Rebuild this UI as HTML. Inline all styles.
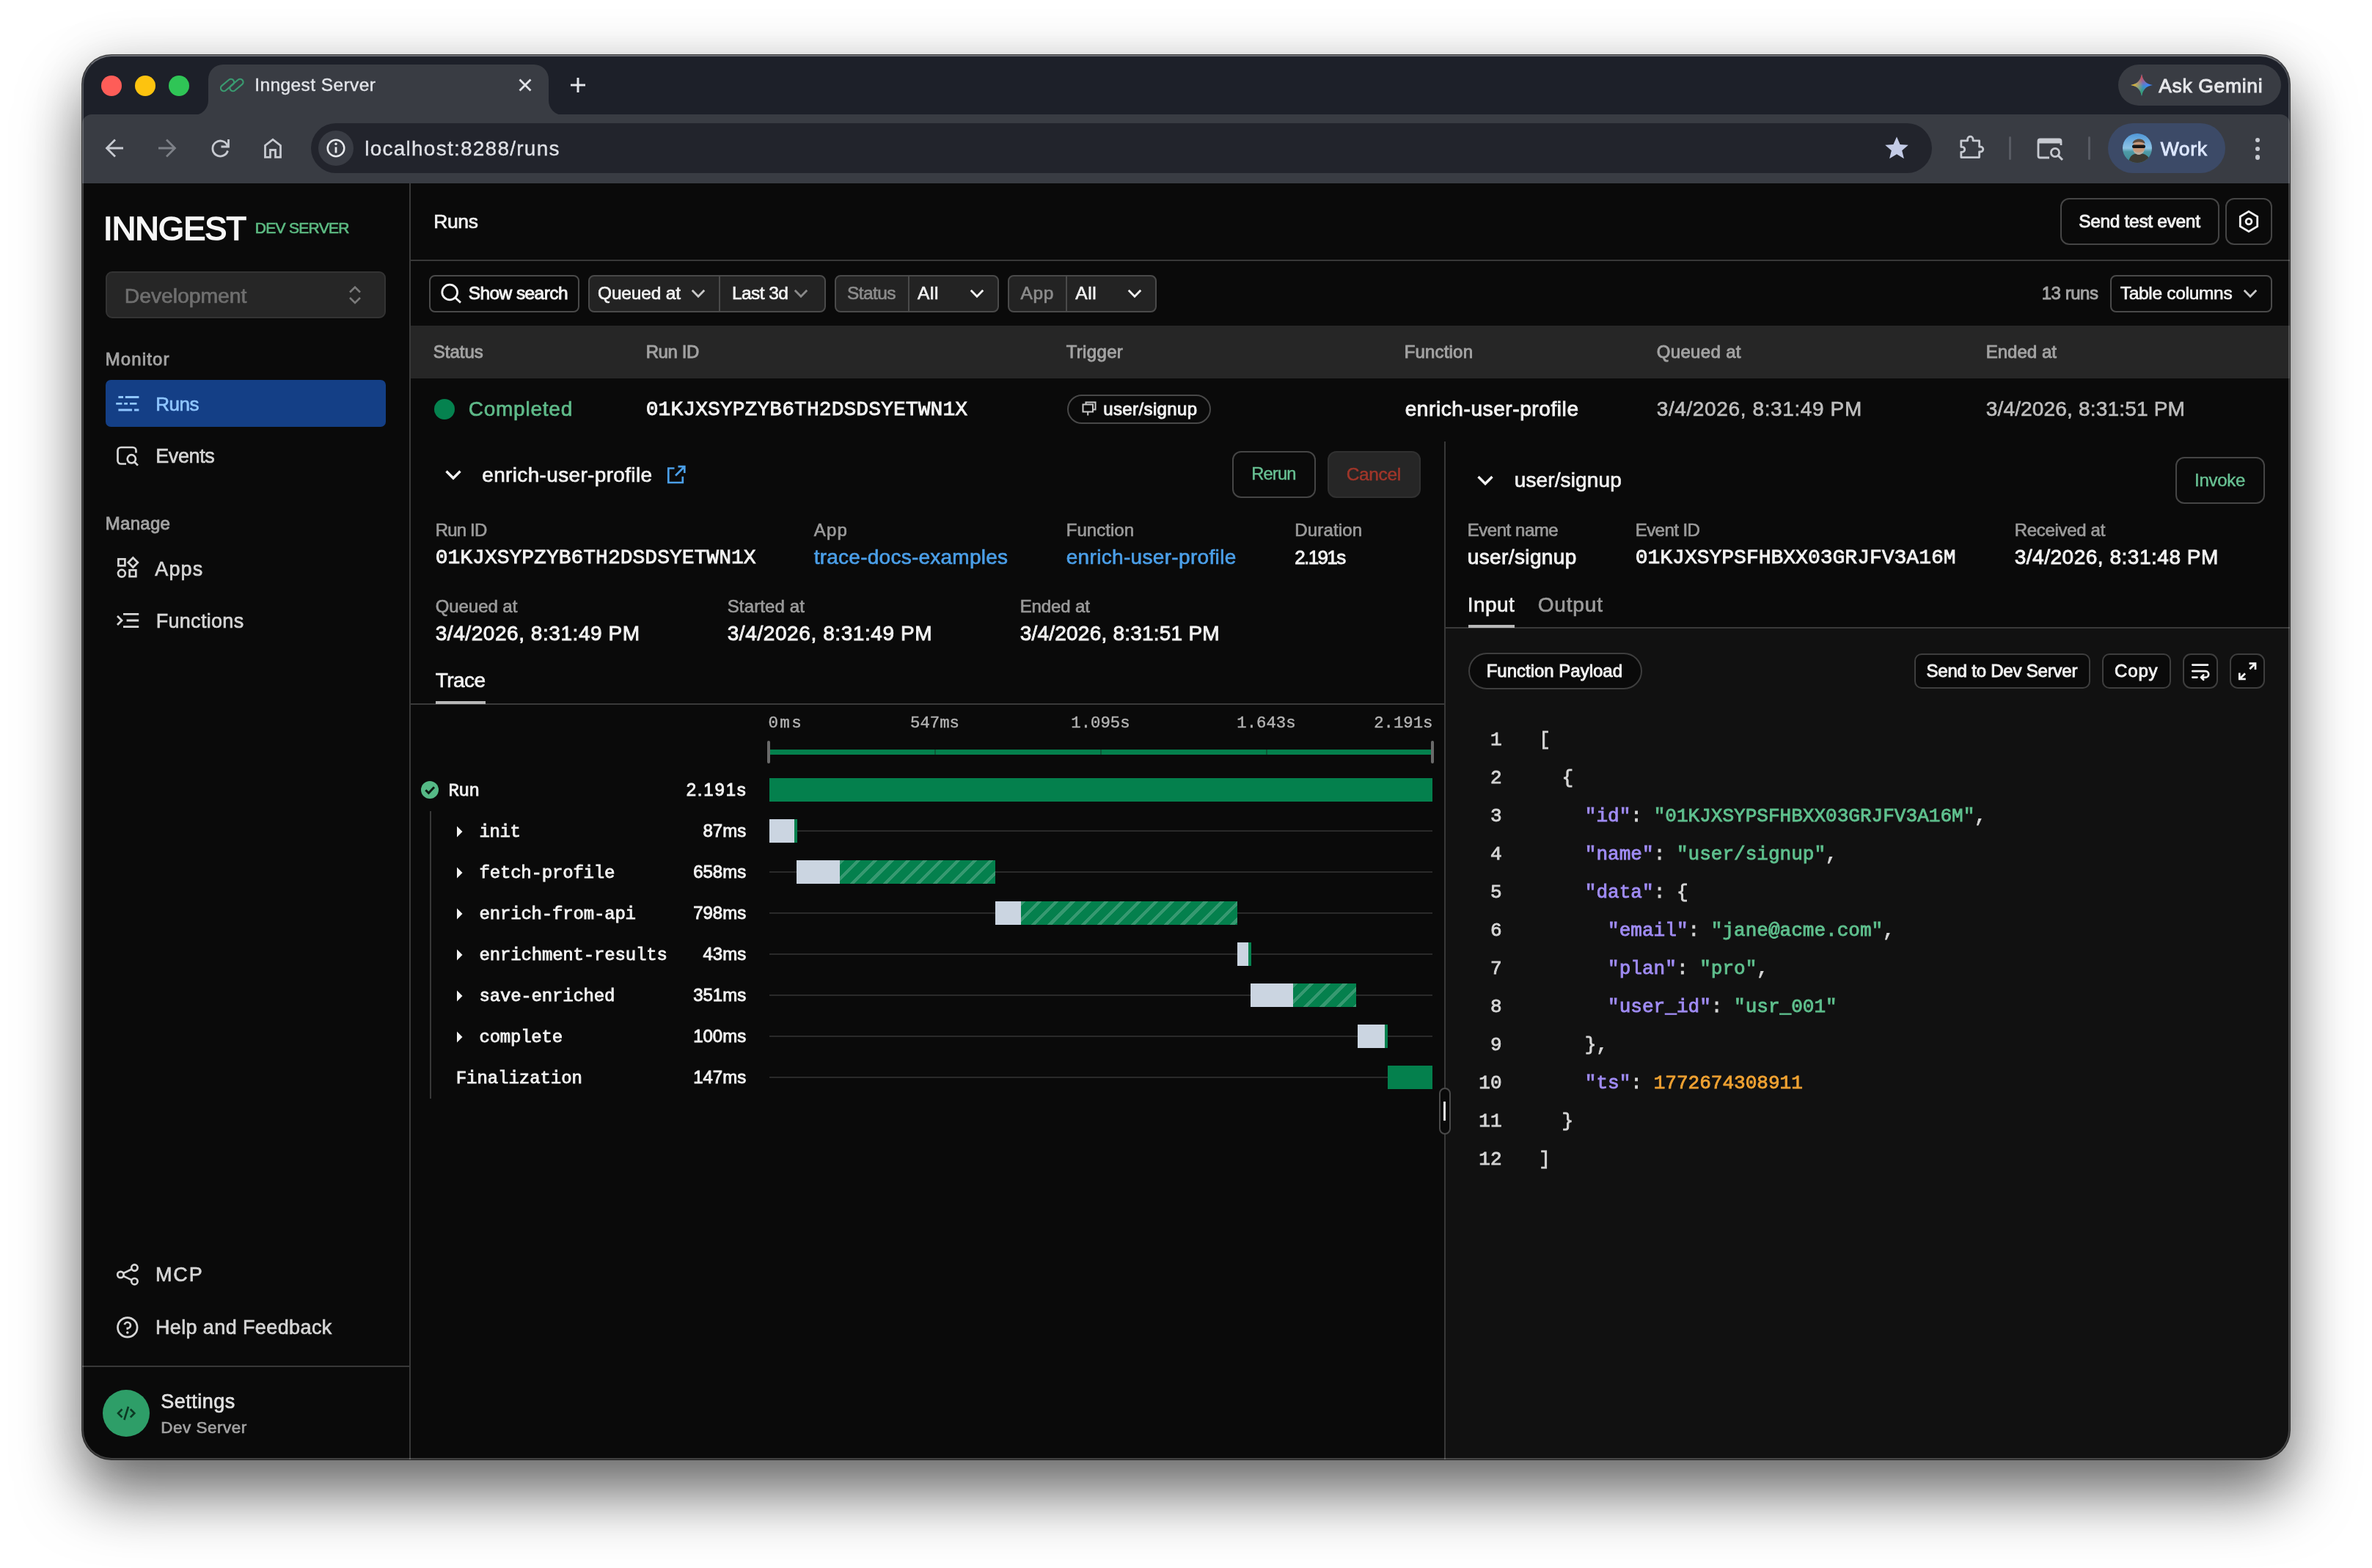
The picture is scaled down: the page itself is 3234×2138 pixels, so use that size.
<!DOCTYPE html>
<html lang="en"><head><meta charset="utf-8"><title>Inngest Server</title><style>
html,body{margin:0;padding:0;background:#fff;}
body{width:3234px;height:2138px;position:relative;overflow:hidden;font-family:"Liberation Sans",sans-serif;}
.sh{position:absolute;left:112px;top:75px;width:3010px;height:1915px;border-radius:40px;box-shadow:0 48px 84px rgba(0,0,0,.56),0 0 72px rgba(0,0,0,.1),0 0 0 1px rgba(0,0,0,.72);background:#0a0a0a;}
.win{position:absolute;left:112px;top:75px;width:3010px;height:1915px;border-radius:40px;overflow:hidden;}
.o{position:absolute;left:-112px;top:-75px;width:3234px;height:2138px;will-change:transform;}
.rim{position:absolute;left:112px;top:75px;width:3010px;height:1915px;border-radius:40px;box-sizing:border-box;border:2px solid rgba(255,255,255,.22);border-top:2.5px solid rgba(255,255,255,.34);pointer-events:none;}
.b{position:absolute;display:block;}
.t{position:absolute;white-space:nowrap;line-height:1;}
</style></head>
<body>
<div class="sh"></div>
<div class="win"><div class="o">
<div class="b " style="left:112px;top:75px;width:3010px;height:101px;background:#1d2029;"></div>
<div class="b " style="left:138px;top:103px;width:28px;height:28px;background:#fe5d58;border-radius:50%;"></div>
<div class="b " style="left:184px;top:103px;width:28px;height:28px;background:#fdc30f;border-radius:50%;"></div>
<div class="b " style="left:230px;top:103px;width:28px;height:28px;background:#2fc556;border-radius:50%;"></div>
<svg class="b" style="left:260px;top:84px;" width="512" height="74" viewBox="260 84 512 74" fill="none"><path d="M264 157 A20 20 0 0 0 284 137 L284 108 A20 20 0 0 1 304 88 L728 88 A20 20 0 0 1 748 108 L748 137 A20 20 0 0 0 768 157 Z" fill="#393c43"/></svg>
<svg class="b" style="left:296px;top:100px;" width="40" height="32" viewBox="296 100 40 32" fill="none"><g stroke="#3a9a70" stroke-width="2.2"><rect x="-10.5" y="-4.2" width="21" height="8.4" rx="4.2" transform="translate(310 116) rotate(-40)"/><rect x="-10.5" y="-4.2" width="21" height="8.4" rx="4.2" transform="translate(322.5 116) rotate(-40)"/></g></svg>
<span class="t" id="t1" style="font-size:24.5px;color:#e2e4e9;-webkit-text-stroke:0.4px;letter-spacing:0.42px;left:347.2px;top:104.1px;">Inngest Server</span>
<svg class="b" style="left:700px;top:100px;" width="32" height="32" viewBox="700 100 32 32" fill="none"><path d="M708.5 108.5 L723.5 123.5 M723.5 108.5 L708.5 123.5" stroke="#e2e4e9" stroke-width="2.8"/></svg>
<svg class="b" style="left:772px;top:100px;" width="32" height="32" viewBox="772 100 32 32" fill="none"><path d="M778 116 H798 M788 106 V126" stroke="#e2e4e9" stroke-width="3"/></svg>
<div class="b " style="left:2888px;top:88px;width:222px;height:56px;background:#393c43;border-radius:28px;"></div>
<svg class="b" style="left:2902px;top:98px;" width="36" height="36" viewBox="-18 -18 36 36" fill="none"><defs><clipPath id="gs"><path d="M0 -15 C1.6 -6 6 -1.6 15 0 C6 1.6 1.6 6 0 15 C-1.6 6 -6 1.6 -15 0 C-6 -1.6 -1.6 -6 0 -15Z"/></clipPath><radialGradient id="gr"><stop offset="0" stop-color="#ea4335"/><stop offset="1" stop-color="#ea4335" stop-opacity="0"/></radialGradient><radialGradient id="gy"><stop offset="0" stop-color="#fbbc04"/><stop offset="1" stop-color="#fbbc04" stop-opacity="0"/></radialGradient><radialGradient id="gg"><stop offset="0" stop-color="#34a853"/><stop offset="1" stop-color="#34a853" stop-opacity="0"/></radialGradient></defs><g clip-path="url(#gs)"><rect x="-16" y="-16" width="32" height="32" fill="#4285f4"/><circle cx="0" cy="-13" r="15" fill="url(#gr)"/><circle cx="0" cy="13" r="15" fill="url(#gg)"/><circle cx="-13" cy="0" r="15" fill="url(#gy)"/></g></svg>
<span class="t" id="t2" style="font-size:26.5px;color:#e6e7ea;-webkit-text-stroke:0.88px;letter-spacing:0.65px;left:2943.2px;top:103.6px;">Ask Gemini</span>
<div class="b " style="left:112px;top:156px;width:3010px;height:94px;background:#393c43;border-radius:13px 13px 0 0;"></div>
<svg class="b" style="left:140px;top:186px;" width="32" height="32" viewBox="140 186 32 32" fill="none"><path d="M168 202 H146 M157 190.5 L145.5 202 L157 213.5" stroke="#c7cad1" stroke-width="2.8"/></svg>
<svg class="b" style="left:212px;top:186px;" width="32" height="32" viewBox="212 186 32 32" fill="none"><path d="M216 202 H238 M227 190.5 L238.5 202 L227 213.5" stroke="#7d8087" stroke-width="2.8"/></svg>
<svg class="b" style="left:284px;top:186px;" width="32" height="32" viewBox="284 186 32 32" fill="none"><path d="M310.3 199 A10.5 10.5 0 1 0 310.5 205.5" stroke="#c7cad1" stroke-width="2.8"/><path d="M311.5 190 V200 H301.5" stroke="#c7cad1" stroke-width="2.8"/></svg>
<svg class="b" style="left:356px;top:186px;" width="32" height="32" viewBox="356 186 32 32" fill="none"><path d="M361.5 214.3 V198.5 L372 190.2 L382.5 198.5 V214.3 H375.5 V204.5 H368.5 V214.3 Z" stroke="#c7cad1" stroke-width="2.8" stroke-linejoin="miter"/></svg>
<div class="b " style="left:424px;top:168px;width:2210px;height:68px;background:#22242c;border-radius:34px;"></div>
<div class="b " style="left:434px;top:178px;width:48px;height:48px;background:#393c44;border-radius:50%;"></div>
<svg class="b" style="left:442px;top:186px;" width="32" height="32" viewBox="442 186 32 32" fill="none"><circle cx="458" cy="202" r="11.3" stroke="#e8eaed" stroke-width="2.5"/><path d="M458 200.5 V208.5" stroke="#e8eaed" stroke-width="2.8"/><circle cx="458" cy="196.2" r="1.7" fill="#e8eaed"/></svg>
<span class="t" id="t3" style="font-size:28px;color:#dfe1e6;-webkit-text-stroke:0.35px;letter-spacing:1.25px;left:497.2px;top:189.4px;">localhost:8288/runs</span>
<svg class="b" style="left:2568px;top:184px;" width="36" height="36" viewBox="-18 -18 36 36" fill="none"><path d="M0 -15.5 L4.6 -5 L15.8 -4.2 L7.2 3.2 L9.9 14.3 L0 8.3 L-9.9 14.3 L-7.2 3.2 L-15.8 -4.2 L-4.6 -5Z" fill="#c3cbe6"/></svg>
<svg class="b" style="left:2668px;top:182px;" width="40" height="40" viewBox="2668 182 40 40" fill="none"><path d="M2673.8 191.8 H2682.6 V189.8 A3.7 3.7 0 0 1 2690 189.8 V191.8 H2698.6 V200.2 H2700.4 A3.4 3.4 0 0 1 2700.4 207 H2698.6 V214.6 H2673.8 V207.3 H2675.2 A3.5 3.5 0 0 0 2675.2 200.3 H2673.8 Z" stroke="#c7cad1" stroke-width="2.8" stroke-linejoin="round"/></svg>
<div class="b " style="left:2738.5px;top:186px;width:3px;height:32px;background:#585b63;border-radius:2px;"></div>
<div class="b " style="left:2846.5px;top:186px;width:3px;height:32px;background:#585b63;border-radius:2px;"></div>
<svg class="b" style="left:2774px;top:182px;" width="40" height="40" viewBox="2774 182 40 40" fill="none"><path d="M2794 215 H2781.5 A2.5 2.5 0 0 1 2779 212.5 V192.5 A2.5 2.5 0 0 1 2781.5 190 H2807.5 A2.5 2.5 0 0 1 2810 192.5 V198" stroke="#c7cad1" stroke-width="2.8"/><path d="M2780 191 H2809 V195.5 H2780Z" fill="#c7cad1"/><circle cx="2802" cy="208" r="5.6" stroke="#c7cad1" stroke-width="2.8"/><path d="M2806 212 L2812 218" stroke="#c7cad1" stroke-width="3"/></svg>
<div class="b " style="left:2874px;top:168px;width:160px;height:68px;background:#3c4a67;border-radius:34px;"></div>
<svg class="b" style="left:2894px;top:182px;" width="40" height="40" viewBox="0 0 40 40" fill="none"><defs><clipPath id="av"><circle cx="20" cy="20" r="20"/></clipPath><linearGradient id="sky" x1="0" y1="0" x2="0" y2="1"><stop offset="0" stop-color="#4f97d8"/><stop offset=".5" stop-color="#8fc4e6"/><stop offset=".62" stop-color="#4d9aa6"/><stop offset="1" stop-color="#3f8a96"/></linearGradient></defs><g clip-path="url(#av)"><rect width="40" height="40" fill="url(#sky)"/><path d="M8 40 C9 30 15 27 22 27 C31 27 37 31 38 40Z" fill="#3b3a33"/><ellipse cx="22" cy="19" rx="8.2" ry="10" fill="#c79a7c"/><path d="M13.5 14 C14 6 30 5 30.5 14 C27 10.5 17 10.5 13.5 14Z" fill="#5a4a3e"/><path d="M14.5 22 C15 31 29 31 29.5 22 C27 27 17 27 14.5 22Z" fill="#b9aea2"/><rect x="13" y="15.5" width="18" height="4.6" rx="2" fill="#161616"/></g></svg>
<span class="t" id="t4" style="font-size:26.5px;color:#dde7ff;-webkit-text-stroke:0.88px;letter-spacing:0.65px;left:2945.7px;top:189.6px;">Work</span>
<div class="b " style="left:3074.7px;top:187.7px;width:6.6px;height:6.6px;background:#c7cad1;border-radius:50%;"></div>
<div class="b " style="left:3074.7px;top:199.5px;width:6.6px;height:6.6px;background:#c7cad1;border-radius:50%;"></div>
<div class="b " style="left:3074.7px;top:211.3px;width:6.6px;height:6.6px;background:#c7cad1;border-radius:50%;"></div>
<div class="b " style="left:112px;top:250px;width:3010px;height:1740px;background:#0a0a0a;"></div>
<div class="b " style="left:558px;top:250px;width:2px;height:1740px;background:#383838;"></div>
<span class="t" id="t5" style="font-size:45px;color:#f6f6f6;-webkit-text-stroke:1.7px;letter-spacing:-0.84px;left:141px;top:288.7px;">INNGEST</span>
<span class="t" id="t6" style="font-size:21px;color:#5cba82;-webkit-text-stroke:0.7px;letter-spacing:-0.69px;left:347.7px;top:300.3px;">DEV SERVER</span>
<div class="b " style="left:144px;top:370px;width:382px;height:64px;background:#262626;border:2px solid #333;border-radius:9px;box-sizing:border-box;"></div>
<span class="t" id="t7" style="font-size:28.5px;color:#6f6f6f;-webkit-text-stroke:0.65px;letter-spacing:-0.11px;left:169.7px;top:389.2px;">Development</span>
<svg class="b" style="left:470px;top:386px;" width="32" height="32" viewBox="470 386 32 32" fill="none"><path d="M477 398.5 L484 391.5 L491 398.5 M477 406 L484 413 L491 406" stroke="#7a7a7a" stroke-width="2.6"/></svg>
<span class="t" id="t8" style="font-size:24px;color:#a3a3a3;-webkit-text-stroke:0.88px;letter-spacing:1.13px;left:143.7px;top:477.9px;">Monitor</span>
<div class="b " style="left:144px;top:518px;width:382px;height:64px;background:#143f86;border-radius:7px;"></div>
<svg class="b" style="left:154px;top:534px;" width="40" height="32" viewBox="154 534 40 32" fill="none"><path d="M161.4 541.5 H168 M170.8 541.5 H189.4 M158.2 550.3 H166.4 M169.2 550.3 H174 M177 550.3 H186.5 M161.4 559 H180 M183 559 H189.4" stroke="#8fc6ff" stroke-width="2.8"/></svg>
<span class="t" id="t9" style="font-size:26px;color:#8fc6ff;-webkit-text-stroke:0.65px;letter-spacing:-0.47px;left:212.2px;top:537.9px;">Runs</span>
<svg class="b" style="left:154px;top:604px;" width="40" height="36" viewBox="154 604 40 36" fill="none"><path d="M172 632.5 H165 A4.5 4.5 0 0 1 160.5 628 V614.5 A4.5 4.5 0 0 1 165 610 H181 A4.5 4.5 0 0 1 185.5 614.5 V617.5" stroke="#d6d6d6" stroke-width="2.7"/><circle cx="179.3" cy="625.8" r="5.6" stroke="#d6d6d6" stroke-width="2.7"/><path d="M183.4 630 L188 634.6" stroke="#d6d6d6" stroke-width="2.7"/></svg>
<span class="t" id="t10" style="font-size:27px;color:#d6d6d6;-webkit-text-stroke:0.65px;letter-spacing:-0.39px;left:212.2px;top:609.2px;">Events</span>
<span class="t" id="t11" style="font-size:24px;color:#a3a3a3;-webkit-text-stroke:0.88px;letter-spacing:0.31px;left:143.7px;top:702.4px;">Manage</span>
<svg class="b" style="left:154px;top:756px;" width="40" height="36" viewBox="154 756 40 36" fill="none"><g stroke="#d6d6d6" stroke-width="2.7"><rect x="161.4" y="762.3" width="9" height="9"/><rect x="-4.6" y="-4.6" width="9.2" height="9.2" transform="translate(181.4 767) rotate(45)"/><circle cx="165.9" cy="781.8" r="4.9"/><rect x="176.6" y="777.4" width="8.7" height="8.7"/></g></svg>
<span class="t" id="t12" style="font-size:27px;color:#d6d6d6;-webkit-text-stroke:0.65px;letter-spacing:1.19px;left:211.2px;top:762.9px;">Apps</span>
<svg class="b" style="left:154px;top:830px;" width="40" height="32" viewBox="154 830 40 32" fill="none"><path d="M168 837.3 H189.2 M172.6 846 H189.2 M168 854.7 H189.2 M160 840 L166 846 L160 852" stroke="#d6d6d6" stroke-width="2.8"/></svg>
<span class="t" id="t13" style="font-size:27px;color:#d6d6d6;-webkit-text-stroke:0.65px;letter-spacing:0.30px;left:212.7px;top:833.5px;">Functions</span>
<svg class="b" style="left:154px;top:1720px;" width="40" height="36" viewBox="154 1720 40 36" fill="none"><g stroke="#d6d6d6" stroke-width="2.7"><circle cx="164.4" cy="1738" r="4.2"/><circle cx="183.4" cy="1728.6" r="4.2"/><circle cx="183.4" cy="1747.2" r="4.2"/><path d="M168.2 1736.1 L179.6 1730.5 M168.2 1739.9 L179.6 1745.4"/></g></svg>
<span class="t" id="t14" style="font-size:27px;color:#d6d6d6;-webkit-text-stroke:0.65px;letter-spacing:1.95px;left:211.9px;top:1724.7px;">MCP</span>
<svg class="b" style="left:156px;top:1792px;" width="36" height="36" viewBox="156 1792 36 36" fill="none"><circle cx="173.8" cy="1809.9" r="13.3" stroke="#d6d6d6" stroke-width="2.7"/><path d="M169.8 1806.3 A4.1 4.1 0 1 1 173.8 1811.2 V1813" stroke="#d6d6d6" stroke-width="2.7"/><circle cx="173.8" cy="1817" r="1.8" fill="#d6d6d6"/></svg>
<span class="t" id="t15" style="font-size:27px;color:#d6d6d6;-webkit-text-stroke:0.65px;letter-spacing:0.39px;left:211.9px;top:1797.1px;">Help and Feedback</span>
<div class="b " style="left:112px;top:1862px;width:447px;height:2px;background:#383838;"></div>
<div class="b " style="left:140px;top:1895px;width:64px;height:64px;background:#2e9e68;border-radius:50%;"></div>
<svg class="b" style="left:156px;top:1911px;" width="32" height="32" viewBox="156 1911 32 32" fill="none"><path d="M166.5 1921.5 L161 1927 L166.5 1932.5 M177.8 1921.5 L183.3 1927 L177.8 1932.5 M175 1918 L169.4 1936" stroke="#0c3a24" stroke-width="2.6"/></svg>
<span class="t" id="t16" style="font-size:27px;color:#e2e2e2;-webkit-text-stroke:0.65px;letter-spacing:0.48px;left:219.3px;top:1898.4px;">Settings</span>
<span class="t" id="t17" style="font-size:22.5px;color:#a3a3a3;-webkit-text-stroke:0.65px;letter-spacing:0.50px;left:219.3px;top:1935.8px;">Dev Server</span>
<span class="t" id="t18" style="font-size:26.5px;color:#f2f2f2;-webkit-text-stroke:0.65px;letter-spacing:-0.36px;left:591.2px;top:289.1px;">Runs</span>
<div class="b " style="left:560px;top:354px;width:2562px;height:2px;background:#383838;"></div>
<div class="b " style="left:2809px;top:270px;width:216.5px;height:64px;border:2px solid #454545;border-radius:12px;box-sizing:border-box;"></div>
<span class="t" id="t19" style="font-size:24.5px;color:#f2f2f2;-webkit-text-stroke:0.88px;letter-spacing:-0.32px;left:2834.2px;top:290.1px;">Send test event</span>
<div class="b " style="left:3034px;top:270px;width:64px;height:64px;border:2px solid #454545;border-radius:12px;box-sizing:border-box;"></div>
<svg class="b" style="left:3048px;top:284px;" width="36" height="36" viewBox="-18 -18 36 36" fill="none"><path d="M0 -13.6 L11.7 -6.8 V6.8 L0 13.6 L-11.7 6.8 V-6.8 Z" stroke="#f2f2f2" stroke-width="2.8" stroke-linejoin="miter"/><circle r="3.9" stroke="#f2f2f2" stroke-width="2.8"/></svg>
<div class="b " style="left:584.5px;top:374.5px;width:205.3px;height:51px;border:2px solid #4a4a4a;border-radius:8px;box-sizing:border-box;"></div>
<svg class="b" style="left:596px;top:382px;" width="36" height="36" viewBox="596 382 36 36" fill="none"><circle cx="613.2" cy="398.5" r="10.4" stroke="#f2f2f2" stroke-width="2.8"/><path d="M620.8 406 L628 412.6" stroke="#f2f2f2" stroke-width="2.8"/></svg>
<span class="t" id="t20" style="font-size:24.5px;color:#f2f2f2;-webkit-text-stroke:0.88px;letter-spacing:-0.58px;left:638.7px;top:387.9px;">Show search</span>
<div class="b " style="left:802px;top:374.5px;width:324px;height:51px;border:2px solid #4a4a4a;border-radius:8px;box-sizing:border-box;background:#232323;"></div>
<div class="b " style="left:980px;top:376px;width:2px;height:48px;background:#4a4a4a;"></div>
<span class="t" id="t21" style="font-size:24.5px;color:#f2f2f2;-webkit-text-stroke:0.65px;letter-spacing:-0.18px;left:815px;top:387.9px;">Queued at</span>
<svg class="b" style="left:938px;top:390px;" width="28" height="20" viewBox="938 390 28 20" fill="none"><path d="M943.75 395.75 L952 404.25 L960.25 395.75" stroke="#c8c8c8" stroke-width="2.8"/></svg>
<span class="t" id="t22" style="font-size:24.5px;color:#f2f2f2;-webkit-text-stroke:0.65px;letter-spacing:-0.55px;left:997.9px;top:387.9px;">Last 3d</span>
<svg class="b" style="left:1078px;top:390px;" width="28" height="20" viewBox="1078 390 28 20" fill="none"><path d="M1083.75 395.75 L1092 404.25 L1100.25 395.75" stroke="#8a8a8a" stroke-width="2.8"/></svg>
<div class="b " style="left:1138.3px;top:374.5px;width:223.5px;height:51px;border:2px solid #4a4a4a;border-radius:8px;box-sizing:border-box;background:#232323;"></div>
<div class="b " style="left:1238px;top:376px;width:2px;height:48px;background:#4a4a4a;"></div>
<span class="t" id="t23" style="font-size:24.5px;color:#8c8c8c;-webkit-text-stroke:0.65px;letter-spacing:-0.59px;left:1155.1px;top:387.9px;">Status</span>
<span class="t" id="t24" style="font-size:24.5px;color:#f2f2f2;-webkit-text-stroke:0.65px;letter-spacing:0.59px;left:1251px;top:387.9px;">All</span>
<svg class="b" style="left:1318px;top:390px;" width="28" height="20" viewBox="1318 390 28 20" fill="none"><path d="M1323.75 395.75 L1332 404.25 L1340.25 395.75" stroke="#f2f2f2" stroke-width="2.8"/></svg>
<div class="b " style="left:1374.4px;top:374.5px;width:202.3px;height:51px;border:2px solid #4a4a4a;border-radius:8px;box-sizing:border-box;background:#232323;"></div>
<div class="b " style="left:1453.2px;top:376px;width:2px;height:48px;background:#4a4a4a;"></div>
<span class="t" id="t25" style="font-size:24.5px;color:#8c8c8c;-webkit-text-stroke:0.65px;letter-spacing:0.65px;left:1391.5px;top:387.9px;">App</span>
<span class="t" id="t26" style="font-size:24.5px;color:#f2f2f2;-webkit-text-stroke:0.65px;letter-spacing:0.63px;left:1466.3px;top:387.9px;">All</span>
<svg class="b" style="left:1532.7px;top:390px;" width="28" height="20" viewBox="1532.7 390 28 20" fill="none"><path d="M1538.45 395.75 L1546.7 404.25 L1554.95 395.75" stroke="#f2f2f2" stroke-width="2.8"/></svg>
<span class="t" id="t27" style="font-size:24px;color:#a3a3a3;-webkit-text-stroke:0.88px;letter-spacing:-0.46px;left:2783.7px;top:388.4px;">13 runs</span>
<div class="b " style="left:2877px;top:374.5px;width:220.5px;height:51px;border:2px solid #4a4a4a;border-radius:8px;box-sizing:border-box;"></div>
<span class="t" id="t28" style="font-size:24.5px;color:#f2f2f2;-webkit-text-stroke:0.65px;letter-spacing:-0.30px;left:2890.7px;top:387.9px;">Table columns</span>
<svg class="b" style="left:3053.5px;top:390px;" width="28" height="20" viewBox="3053.5 390 28 20" fill="none"><path d="M3059.25 395.75 L3067.5 404.25 L3075.75 395.75" stroke="#c8c8c8" stroke-width="2.8"/></svg>
<div class="b " style="left:560px;top:444px;width:2562px;height:72px;background:#262626;"></div>
<span class="t" id="t29" style="font-size:24px;color:#a3a3a3;-webkit-text-stroke:0.88px;letter-spacing:0.01px;left:590.7px;top:468.0px;">Status</span>
<span class="t" id="t30" style="font-size:24px;color:#a3a3a3;-webkit-text-stroke:0.88px;letter-spacing:-0.42px;left:880.7px;top:468.0px;">Run ID</span>
<span class="t" id="t31" style="font-size:24px;color:#a3a3a3;-webkit-text-stroke:0.88px;letter-spacing:0.33px;left:1453.7px;top:468.0px;">Trigger</span>
<span class="t" id="t32" style="font-size:24px;color:#a3a3a3;-webkit-text-stroke:0.88px;letter-spacing:0.18px;left:1914.7px;top:468.0px;">Function</span>
<span class="t" id="t33" style="font-size:24px;color:#a3a3a3;-webkit-text-stroke:0.88px;letter-spacing:0.34px;left:2258.7px;top:468.0px;">Queued at</span>
<span class="t" id="t34" style="font-size:24px;color:#a3a3a3;-webkit-text-stroke:0.88px;letter-spacing:0.03px;left:2707.7px;top:468.0px;">Ended at</span>
<div class="b " style="left:592px;top:544px;width:28px;height:28px;background:#05824f;border-radius:50%;"></div>
<span class="t" id="t35" style="font-size:28px;color:#5fbb8a;-webkit-text-stroke:0.65px;letter-spacing:0.77px;left:638.7px;top:544.4px;">Completed</span>
<span class="t" id="t36" style="font-size:28px;color:#f2f2f2;-webkit-text-stroke:0.85px;font-family:'Liberation Mono', monospace;letter-spacing:0.06px;left:880.7px;top:545.4px;">01KJXSYPZYB6TH2DSDSYETWN1X</span>
<div class="b " style="left:1455px;top:537.5px;width:195.5px;height:40px;border:2px solid #484848;border-radius:20px;box-sizing:border-box;"></div>
<svg class="b" style="left:1473px;top:545px;" width="24" height="24" viewBox="1474 546 24 24" fill="none"><path d="M1481.5 552 V549.5 H1494.5 V559.5 H1491.5" stroke="#c8c8c8" stroke-width="2"/><path d="M1477.5 552.5 H1491 V562.5 H1477.5 Z M1484.2 562.5 V567.5" stroke="#c8c8c8" stroke-width="2"/></svg>
<span class="t" id="t37" style="font-size:24px;color:#f2f2f2;-webkit-text-stroke:0.88px;letter-spacing:0.39px;left:1504.2px;top:546.4px;">user/signup</span>
<span class="t" id="t38" style="font-size:28px;color:#f2f2f2;-webkit-text-stroke:0.88px;letter-spacing:0.59px;left:1915.7px;top:544.4px;">enrich-user-profile</span>
<span class="t" id="t39" style="font-size:28px;color:#bdbdbd;-webkit-text-stroke:0.65px;letter-spacing:0.62px;left:2258.7px;top:544.4px;">3/4/2026, 8:31:49 PM</span>
<span class="t" id="t40" style="font-size:28px;color:#bdbdbd;-webkit-text-stroke:0.65px;letter-spacing:0.18px;left:2707.7px;top:544.4px;">3/4/2026, 8:31:51 PM</span>
<div class="b " style="left:1969px;top:602px;width:2px;height:1388px;background:#383838;"></div>
<svg class="b" style="left:602px;top:634px;" width="32" height="28" viewBox="602 634 32 28" fill="none"><path d="M608.5 642.5 L618 652 L627.5 642.5" stroke="#f2f2f2" stroke-width="3.4"/></svg>
<span class="t" id="t41" style="font-size:28px;color:#f2f2f2;-webkit-text-stroke:0.65px;letter-spacing:0.34px;left:657.3px;top:633.7px;">enrich-user-profile</span>
<svg class="b" style="left:906px;top:632px;" width="32" height="32" viewBox="906 632 32 32" fill="none"><path d="M919.5 638.5 H911.3 V658 H930.8 V649.8 M924.5 636.2 H933.3 V645 M933 636.5 L921 648.5" stroke="#4b9fe8" stroke-width="2.7"/></svg>
<div class="b " style="left:1680px;top:615px;width:114px;height:64px;border:2px solid #454545;border-radius:12px;box-sizing:border-box;"></div>
<span class="t" id="t42" style="font-size:23.7px;color:#68c193;-webkit-text-stroke:0.45px;letter-spacing:-0.81px;left:1706.2px;top:635.1px;">Rerun</span>
<div class="b " style="left:1810px;top:615px;width:127px;height:64px;background:#262626;border:2px solid #303030;border-radius:12px;box-sizing:border-box;"></div>
<span class="t" id="t43" style="font-size:24.5px;color:#a0362a;-webkit-text-stroke:0.45px;letter-spacing:-0.35px;left:1835.7px;top:634.7px;">Cancel</span>
<span class="t" id="t44" style="font-size:24px;color:#9b9b9b;-webkit-text-stroke:0.65px;letter-spacing:-0.82px;left:593.7px;top:710.9px;">Run ID</span>
<span class="t" id="t45" style="font-size:24px;color:#9b9b9b;-webkit-text-stroke:0.65px;letter-spacing:1.29px;left:1109.7px;top:710.9px;">App</span>
<span class="t" id="t46" style="font-size:24px;color:#9b9b9b;-webkit-text-stroke:0.65px;letter-spacing:0.04px;left:1453.7px;top:710.9px;">Function</span>
<span class="t" id="t47" style="font-size:24px;color:#9b9b9b;-webkit-text-stroke:0.65px;letter-spacing:0.18px;left:1765.2px;top:710.9px;">Duration</span>
<span class="t" id="t48" style="font-size:28px;color:#f2f2f2;-webkit-text-stroke:0.85px;font-family:'Liberation Mono', monospace;letter-spacing:-0.00px;left:593.7px;top:746.9px;">01KJXSYPZYB6TH2DSDSYETWN1X</span>
<span class="t" id="t49" style="font-size:28px;color:#4b9fe8;-webkit-text-stroke:0.65px;letter-spacing:0.25px;left:1109.7px;top:745.9px;">trace-docs-examples</span>
<span class="t" id="t50" style="font-size:28px;color:#4b9fe8;-webkit-text-stroke:0.65px;letter-spacing:0.33px;left:1453.7px;top:745.9px;">enrich-user-profile</span>
<span class="t" id="t51" style="font-size:26px;color:#f2f2f2;-webkit-text-stroke:0.88px;letter-spacing:-1.61px;left:1765.2px;top:746.9px;">2.191s</span>
<span class="t" id="t52" style="font-size:24px;color:#9b9b9b;-webkit-text-stroke:0.65px;letter-spacing:-0.06px;left:593.7px;top:814.9px;">Queued at</span>
<span class="t" id="t53" style="font-size:24px;color:#9b9b9b;-webkit-text-stroke:0.65px;letter-spacing:0.14px;left:991.7px;top:814.9px;">Started at</span>
<span class="t" id="t54" style="font-size:24px;color:#9b9b9b;-webkit-text-stroke:0.65px;letter-spacing:-0.11px;left:1390.7px;top:814.9px;">Ended at</span>
<span class="t" id="t55" style="font-size:28px;color:#f2f2f2;-webkit-text-stroke:0.88px;letter-spacing:0.56px;left:593.7px;top:849.9px;">3/4/2026, 8:31:49 PM</span>
<span class="t" id="t56" style="font-size:28px;color:#f2f2f2;-webkit-text-stroke:0.88px;letter-spacing:0.59px;left:991.7px;top:849.9px;">3/4/2026, 8:31:49 PM</span>
<span class="t" id="t57" style="font-size:28px;color:#f2f2f2;-webkit-text-stroke:0.88px;letter-spacing:0.22px;left:1390.7px;top:849.9px;">3/4/2026, 8:31:51 PM</span>
<span class="t" id="t58" style="font-size:28px;color:#f2f2f2;-webkit-text-stroke:0.65px;letter-spacing:-0.56px;left:593.7px;top:913.9px;">Trace</span>
<div class="b " style="left:560px;top:958.5px;width:1409px;height:2px;background:#3a3a3a;"></div>
<div class="b " style="left:594px;top:955.5px;width:68px;height:4px;background:#b8b8b8;"></div>
<svg class="b" style="left:2009px;top:641px;" width="32" height="28" viewBox="2009 641 32 28" fill="none"><path d="M2015.5 650 L2025 659.5 L2034.5 650" stroke="#f2f2f2" stroke-width="3.4"/></svg>
<span class="t" id="t59" style="font-size:28px;color:#f2f2f2;-webkit-text-stroke:0.65px;letter-spacing:0.13px;left:2064.7px;top:641.4px;">user/signup</span>
<div class="b " style="left:2966px;top:623px;width:122px;height:64px;border:2px solid #454545;border-radius:12px;box-sizing:border-box;"></div>
<span class="t" id="t60" style="font-size:24px;color:#68c193;-webkit-text-stroke:0.45px;letter-spacing:-0.26px;left:2992px;top:642.8px;">Invoke</span>
<span class="t" id="t61" style="font-size:24px;color:#9b9b9b;-webkit-text-stroke:0.65px;letter-spacing:-0.45px;left:2000.7px;top:710.9px;">Event name</span>
<span class="t" id="t62" style="font-size:24px;color:#9b9b9b;-webkit-text-stroke:0.65px;letter-spacing:-0.54px;left:2229.7px;top:710.9px;">Event ID</span>
<span class="t" id="t63" style="font-size:24px;color:#9b9b9b;-webkit-text-stroke:0.65px;letter-spacing:-0.31px;left:2746.7px;top:710.9px;">Received at</span>
<span class="t" id="t64" style="font-size:28px;color:#f2f2f2;-webkit-text-stroke:0.88px;letter-spacing:0.39px;left:2000.7px;top:745.9px;">user/signup</span>
<span class="t" id="t65" style="font-size:28px;color:#f2f2f2;-webkit-text-stroke:0.85px;font-family:'Liberation Mono', monospace;letter-spacing:-0.00px;left:2229.7px;top:746.9px;">01KJXSYPSFHBXX03GRJFV3A16M</span>
<span class="t" id="t66" style="font-size:28px;color:#f2f2f2;-webkit-text-stroke:0.88px;letter-spacing:0.52px;left:2746.7px;top:745.9px;">3/4/2026, 8:31:48 PM</span>
<span class="t" id="t67" style="font-size:28px;color:#f2f2f2;-webkit-text-stroke:0.65px;letter-spacing:0.43px;left:2000.7px;top:810.8px;">Input</span>
<span class="t" id="t68" style="font-size:28px;color:#9b9b9b;-webkit-text-stroke:0.65px;letter-spacing:0.85px;left:2096.7px;top:810.8px;">Output</span>
<div class="b " style="left:1971px;top:856px;width:1151px;height:1134px;background:#111111;"></div>
<div class="b " style="left:1971px;top:855px;width:1151px;height:2px;background:#3a3a3a;"></div>
<div class="b " style="left:2001.5px;top:851.5px;width:63.2px;height:4px;background:#b8b8b8;"></div>
<div class="b " style="left:2001.5px;top:889.5px;width:237px;height:50.5px;border:2px solid #3e3e3e;box-sizing:border-box;background:#0a0a0a;border-radius:26px;"></div>
<span class="t" id="t69" style="font-size:24px;color:#f2f2f2;-webkit-text-stroke:0.88px;letter-spacing:-0.01px;left:2026.7px;top:903.1px;">Function Payload</span>
<div class="b " style="left:2609.5px;top:891px;width:240.5px;height:48px;border:2px solid #3e3e3e;box-sizing:border-box;background:#0a0a0a;border-radius:10px;"></div>
<span class="t" id="t70" style="font-size:24px;color:#f2f2f2;-webkit-text-stroke:0.88px;letter-spacing:-0.21px;left:2626.5px;top:903.4px;">Send to Dev Server</span>
<div class="b " style="left:2866px;top:891px;width:94px;height:48px;border:2px solid #3e3e3e;box-sizing:border-box;background:#0a0a0a;border-radius:10px;"></div>
<span class="t" id="t71" style="font-size:24px;color:#f2f2f2;-webkit-text-stroke:0.88px;letter-spacing:0.85px;left:2883px;top:903.4px;">Copy</span>
<div class="b " style="left:2976px;top:891px;width:48px;height:48px;border:2px solid #3e3e3e;box-sizing:border-box;background:#0a0a0a;border-radius:11px;"></div>
<svg class="b" style="left:2984px;top:899px;" width="32" height="32" viewBox="2984 899 32 32" fill="none"><path d="M2989.3 906.6 H3010 M2989.3 915.2 H3007 A4.2 4.2 0 0 1 3007 923.6 H3002 M2989.3 923.6 H2995.5 M3004.2 920.4 L3001 923.6 L3004.2 926.8" stroke="#f2f2f2" stroke-width="2.7" stroke-linecap="round" stroke-linejoin="round"/></svg>
<div class="b " style="left:3040px;top:891px;width:48px;height:48px;border:2px solid #3e3e3e;box-sizing:border-box;background:#0a0a0a;border-radius:11px;"></div>
<svg class="b" style="left:3048px;top:899px;" width="32" height="32" viewBox="3048 899 32 32" fill="none"><path d="M3066.5 904.6 H3075 V913 M3074.5 905 L3067.3 912.2 M3061.8 925.9 H3053.3 V917.5 M3053.8 925.5 L3061 918.3" stroke="#f2f2f2" stroke-width="2.7"/></svg>
<span class="t" id="t72" style="font-size:22.5px;color:#b4b4b4;-webkit-text-stroke:0.4px;font-family:'Liberation Mono', monospace;letter-spacing:2.34px;left:1047.5px;top:974.9px;">0ms</span>
<span class="t" id="t73" style="font-size:22.3px;color:#b4b4b4;-webkit-text-stroke:0.4px;font-family:'Liberation Mono', monospace;left:1274.5px;transform:translateX(-50%);top:975.0px;">547ms</span>
<span class="t" id="t74" style="font-size:22.3px;color:#b4b4b4;-webkit-text-stroke:0.4px;font-family:'Liberation Mono', monospace;left:1500.5px;transform:translateX(-50%);top:975.0px;">1.095s</span>
<span class="t" id="t75" style="font-size:22.3px;color:#b4b4b4;-webkit-text-stroke:0.4px;font-family:'Liberation Mono', monospace;left:1726.5px;transform:translateX(-50%);top:975.0px;">1.643s</span>
<span class="t" id="t76" style="font-size:22.3px;color:#b4b4b4;-webkit-text-stroke:0.4px;font-family:'Liberation Mono', monospace;right:1280.5px;top:975.0px;">2.191s</span>
<div class="b " style="left:1048.8px;top:1021.5px;width:904.2px;height:7px;background:#04804d;"></div>
<div class="b " style="left:1273.85px;top:1021.5px;width:2px;height:7px;background:#0d5a3a;"></div>
<div class="b " style="left:1499.9px;top:1021.5px;width:2px;height:7px;background:#0d5a3a;"></div>
<div class="b " style="left:1725.95px;top:1021.5px;width:2px;height:7px;background:#0d5a3a;"></div>
<div class="b " style="left:1046.4px;top:1010px;width:4px;height:30.5px;background:#6a6a6a;border-radius:2px;"></div>
<div class="b " style="left:1951.4px;top:1010px;width:4px;height:30.5px;background:#6a6a6a;border-radius:2px;"></div>
<div class="b " style="left:586px;top:1106px;width:2px;height:392px;background:#383838;"></div>
<div class="b " style="left:1048.8px;top:1061px;width:904.2px;height:32px;background:#04804d;"></div>
<div class="b " style="left:574px;top:1065px;width:24px;height:24px;background:#55b986;border-radius:50%;"></div>
<svg class="b" style="left:574px;top:1065px;" width="24" height="24" viewBox="574 1065 24 24" fill="none"><path d="M580.3 1077.2 L584.4 1081.3 L592 1073.2" stroke="#0b1a12" stroke-width="2.9"/></svg>
<span class="t" id="t77" style="font-size:24px;color:#f2f2f2;-webkit-text-stroke:0.85px;font-family:'Liberation Mono', monospace;letter-spacing:-0.36px;left:611.5px;top:1067.2px;">Run</span>
<span class="t" id="t78" style="font-size:24px;color:#f2f2f2;-webkit-text-stroke:0.88px;letter-spacing:1.81px;left:935.7px;top:1065.4px;">2.191s</span>
<div class="b " style="left:1048.8px;top:1132px;width:904.2px;height:2px;background:#2a2a2a;"></div>
<div class="b " style="left:1048.8px;top:1117px;width:33.9px;height:32px;background:#cbd5e1;"></div>
<div class="b " style="left:1082.7px;top:1117px;width:4.1px;height:32px;background:#04804d;"></div>
<svg class="b" style="left:620px;top:1123px;" width="14" height="20" viewBox="620 1123 14 20" fill="none"><path d="M623 1126.4 L630.5 1134 L623 1141.6 Z" fill="#f2f2f2"/></svg>
<span class="t" id="t79" style="font-size:24px;color:#f2f2f2;-webkit-text-stroke:0.85px;font-family:'Liberation Mono', monospace;letter-spacing:-0.40px;left:653.5px;top:1123.2px;">init</span>
<span class="t" id="t80" style="font-size:24px;color:#f2f2f2;-webkit-text-stroke:0.88px;right:2216.8px;top:1121.4px;">87ms</span>
<div class="b " style="left:1048.8px;top:1188px;width:904.2px;height:2px;background:#2a2a2a;"></div>
<div class="b " style="left:1086px;top:1173px;width:59px;height:32px;background:#cbd5e1;"></div>
<div class="b " style="left:1145px;top:1173px;width:211.7px;height:32px;background:repeating-linear-gradient(135deg,rgba(255,255,255,.2) 0 4.4px,rgba(255,255,255,0) 4.4px 16px) #04804d;"></div>
<svg class="b" style="left:620px;top:1179px;" width="14" height="20" viewBox="620 1179 14 20" fill="none"><path d="M623 1182.4 L630.5 1190 L623 1197.6 Z" fill="#f2f2f2"/></svg>
<span class="t" id="t81" style="font-size:24px;color:#f2f2f2;-webkit-text-stroke:0.85px;font-family:'Liberation Mono', monospace;letter-spacing:-0.19px;left:653.5px;top:1179.2px;">fetch-profile</span>
<span class="t" id="t82" style="font-size:24px;color:#f2f2f2;-webkit-text-stroke:0.88px;right:2216.8px;top:1177.4px;">658ms</span>
<div class="b " style="left:1048.8px;top:1244px;width:904.2px;height:2px;background:#2a2a2a;"></div>
<div class="b " style="left:1356.7px;top:1229px;width:35.3px;height:32px;background:#cbd5e1;"></div>
<div class="b " style="left:1392px;top:1229px;width:294.7px;height:32px;background:repeating-linear-gradient(135deg,rgba(255,255,255,.2) 0 4.4px,rgba(255,255,255,0) 4.4px 16px) #04804d;"></div>
<svg class="b" style="left:620px;top:1235px;" width="14" height="20" viewBox="620 1235 14 20" fill="none"><path d="M623 1238.4 L630.5 1246 L623 1253.6 Z" fill="#f2f2f2"/></svg>
<span class="t" id="t83" style="font-size:24px;color:#f2f2f2;-webkit-text-stroke:0.85px;font-family:'Liberation Mono', monospace;letter-spacing:-0.18px;left:653.5px;top:1235.2px;">enrich-from-api</span>
<span class="t" id="t84" style="font-size:24px;color:#f2f2f2;-webkit-text-stroke:0.88px;right:2216.8px;top:1233.4px;">798ms</span>
<div class="b " style="left:1048.8px;top:1300px;width:904.2px;height:2px;background:#2a2a2a;"></div>
<div class="b " style="left:1686.7px;top:1285px;width:15.3px;height:32px;background:#cbd5e1;"></div>
<div class="b " style="left:1702px;top:1285px;width:3.6px;height:32px;background:#04804d;"></div>
<svg class="b" style="left:620px;top:1291px;" width="14" height="20" viewBox="620 1291 14 20" fill="none"><path d="M623 1294.4 L630.5 1302 L623 1309.6 Z" fill="#f2f2f2"/></svg>
<span class="t" id="t85" style="font-size:24px;color:#f2f2f2;-webkit-text-stroke:0.85px;font-family:'Liberation Mono', monospace;letter-spacing:-0.17px;left:653.5px;top:1291.2px;">enrichment-results</span>
<span class="t" id="t86" style="font-size:24px;color:#f2f2f2;-webkit-text-stroke:0.88px;right:2216.8px;top:1289.4px;">43ms</span>
<div class="b " style="left:1048.8px;top:1356px;width:904.2px;height:2px;background:#2a2a2a;"></div>
<div class="b " style="left:1704.8px;top:1341px;width:58px;height:32px;background:#cbd5e1;"></div>
<div class="b " style="left:1762.8px;top:1341px;width:86.7px;height:32px;background:repeating-linear-gradient(135deg,rgba(255,255,255,.2) 0 4.4px,rgba(255,255,255,0) 4.4px 16px) #04804d;"></div>
<svg class="b" style="left:620px;top:1347px;" width="14" height="20" viewBox="620 1347 14 20" fill="none"><path d="M623 1350.4 L630.5 1358 L623 1365.6 Z" fill="#f2f2f2"/></svg>
<span class="t" id="t87" style="font-size:24px;color:#f2f2f2;-webkit-text-stroke:0.85px;font-family:'Liberation Mono', monospace;letter-spacing:-0.19px;left:653.5px;top:1347.2px;">save-enriched</span>
<span class="t" id="t88" style="font-size:24px;color:#f2f2f2;-webkit-text-stroke:0.88px;right:2216.8px;top:1345.4px;">351ms</span>
<div class="b " style="left:1048.8px;top:1412px;width:904.2px;height:2px;background:#2a2a2a;"></div>
<div class="b " style="left:1850.7px;top:1397px;width:37.3px;height:32px;background:#cbd5e1;"></div>
<div class="b " style="left:1888px;top:1397px;width:3.6px;height:32px;background:#04804d;"></div>
<svg class="b" style="left:620px;top:1403px;" width="14" height="20" viewBox="620 1403 14 20" fill="none"><path d="M623 1406.4 L630.5 1414 L623 1421.6 Z" fill="#f2f2f2"/></svg>
<span class="t" id="t89" style="font-size:24px;color:#f2f2f2;-webkit-text-stroke:0.85px;font-family:'Liberation Mono', monospace;letter-spacing:-0.24px;left:653.5px;top:1403.2px;">complete</span>
<span class="t" id="t90" style="font-size:24px;color:#f2f2f2;-webkit-text-stroke:0.88px;right:2216.8px;top:1401.4px;">100ms</span>
<div class="b " style="left:1048.8px;top:1468px;width:904.2px;height:2px;background:#2a2a2a;"></div>
<div class="b " style="left:1892px;top:1453px;width:61px;height:32px;background:#04804d;"></div>
<span class="t" id="t91" style="font-size:24px;color:#f2f2f2;-webkit-text-stroke:0.85px;font-family:'Liberation Mono', monospace;letter-spacing:-0.05px;left:621.7px;top:1459.2px;">Finalization</span>
<span class="t" id="t92" style="font-size:24px;color:#f2f2f2;-webkit-text-stroke:0.88px;right:2216.8px;top:1457.4px;">147ms</span>
<div class="b " style="left:1961.5px;top:1483px;width:16px;height:64px;background:#0a0a0a;border:2px solid #4a4a4a;border-radius:9px;box-sizing:border-box;"></div>
<div class="b " style="left:1968px;top:1501.5px;width:3px;height:26.5px;background:#e6e6e6;"></div>
<span class="t" id="t93" style="font-size:26px;color:#d6d6d6;-webkit-text-stroke:0.85px;font-family:'Liberation Mono', monospace;right:1186.5px;top:996.3px;">1</span>
<span class="t" id="t94" style="font-size:26.05px;color:#d6d6d6;-webkit-text-stroke:0.85px;font-family:'Liberation Mono', monospace;left:2098.3px;top:996.3px;white-space:pre;">[</span>
<span class="t" id="t95" style="font-size:26px;color:#d6d6d6;-webkit-text-stroke:0.85px;font-family:'Liberation Mono', monospace;right:1186.5px;top:1048.3px;">2</span>
<span class="t" id="t96" style="font-size:26.05px;color:#d6d6d6;-webkit-text-stroke:0.85px;font-family:'Liberation Mono', monospace;left:2098.3px;top:1048.3px;white-space:pre;">  {</span>
<span class="t" id="t97" style="font-size:26px;color:#d6d6d6;-webkit-text-stroke:0.85px;font-family:'Liberation Mono', monospace;right:1186.5px;top:1100.3px;">3</span>
<span class="t" id="t98" style="font-size:26.05px;color:#d6d6d6;-webkit-text-stroke:0.85px;font-family:'Liberation Mono', monospace;left:2098.3px;top:1100.3px;white-space:pre;">    <span style="color:#a08cf5">&quot;id&quot;</span>: <span style="color:#5fc08e">&quot;01KJXSYPSFHBXX03GRJFV3A16M&quot;</span>,</span>
<span class="t" id="t99" style="font-size:26px;color:#d6d6d6;-webkit-text-stroke:0.85px;font-family:'Liberation Mono', monospace;right:1186.5px;top:1152.3px;">4</span>
<span class="t" id="t100" style="font-size:26.05px;color:#d6d6d6;-webkit-text-stroke:0.85px;font-family:'Liberation Mono', monospace;left:2098.3px;top:1152.3px;white-space:pre;">    <span style="color:#a08cf5">&quot;name&quot;</span>: <span style="color:#5fc08e">&quot;user/signup&quot;</span>,</span>
<span class="t" id="t101" style="font-size:26px;color:#d6d6d6;-webkit-text-stroke:0.85px;font-family:'Liberation Mono', monospace;right:1186.5px;top:1204.3px;">5</span>
<span class="t" id="t102" style="font-size:26.05px;color:#d6d6d6;-webkit-text-stroke:0.85px;font-family:'Liberation Mono', monospace;left:2098.3px;top:1204.3px;white-space:pre;">    <span style="color:#a08cf5">&quot;data&quot;</span>: {</span>
<span class="t" id="t103" style="font-size:26px;color:#d6d6d6;-webkit-text-stroke:0.85px;font-family:'Liberation Mono', monospace;right:1186.5px;top:1256.3px;">6</span>
<span class="t" id="t104" style="font-size:26.05px;color:#d6d6d6;-webkit-text-stroke:0.85px;font-family:'Liberation Mono', monospace;left:2098.3px;top:1256.3px;white-space:pre;">      <span style="color:#a08cf5">&quot;email&quot;</span>: <span style="color:#5fc08e">&quot;jane@acme.com&quot;</span>,</span>
<span class="t" id="t105" style="font-size:26px;color:#d6d6d6;-webkit-text-stroke:0.85px;font-family:'Liberation Mono', monospace;right:1186.5px;top:1308.3px;">7</span>
<span class="t" id="t106" style="font-size:26.05px;color:#d6d6d6;-webkit-text-stroke:0.85px;font-family:'Liberation Mono', monospace;left:2098.3px;top:1308.3px;white-space:pre;">      <span style="color:#a08cf5">&quot;plan&quot;</span>: <span style="color:#5fc08e">&quot;pro&quot;</span>,</span>
<span class="t" id="t107" style="font-size:26px;color:#d6d6d6;-webkit-text-stroke:0.85px;font-family:'Liberation Mono', monospace;right:1186.5px;top:1360.3px;">8</span>
<span class="t" id="t108" style="font-size:26.05px;color:#d6d6d6;-webkit-text-stroke:0.85px;font-family:'Liberation Mono', monospace;left:2098.3px;top:1360.3px;white-space:pre;">      <span style="color:#a08cf5">&quot;user_id&quot;</span>: <span style="color:#5fc08e">&quot;usr_001&quot;</span></span>
<span class="t" id="t109" style="font-size:26px;color:#d6d6d6;-webkit-text-stroke:0.85px;font-family:'Liberation Mono', monospace;right:1186.5px;top:1412.3px;">9</span>
<span class="t" id="t110" style="font-size:26.05px;color:#d6d6d6;-webkit-text-stroke:0.85px;font-family:'Liberation Mono', monospace;left:2098.3px;top:1412.3px;white-space:pre;">    },</span>
<span class="t" id="t111" style="font-size:26px;color:#d6d6d6;-webkit-text-stroke:0.85px;font-family:'Liberation Mono', monospace;right:1186.5px;top:1464.3px;">10</span>
<span class="t" id="t112" style="font-size:26.05px;color:#d6d6d6;-webkit-text-stroke:0.85px;font-family:'Liberation Mono', monospace;left:2098.3px;top:1464.3px;white-space:pre;">    <span style="color:#a08cf5">&quot;ts&quot;</span>: <span style="color:#f0a232">1772674308911</span></span>
<span class="t" id="t113" style="font-size:26px;color:#d6d6d6;-webkit-text-stroke:0.85px;font-family:'Liberation Mono', monospace;right:1186.5px;top:1516.3px;">11</span>
<span class="t" id="t114" style="font-size:26.05px;color:#d6d6d6;-webkit-text-stroke:0.85px;font-family:'Liberation Mono', monospace;left:2098.3px;top:1516.3px;white-space:pre;">  }</span>
<span class="t" id="t115" style="font-size:26px;color:#d6d6d6;-webkit-text-stroke:0.85px;font-family:'Liberation Mono', monospace;right:1186.5px;top:1568.3px;">12</span>
<span class="t" id="t116" style="font-size:26.05px;color:#d6d6d6;-webkit-text-stroke:0.85px;font-family:'Liberation Mono', monospace;left:2098.3px;top:1568.3px;white-space:pre;">]</span>
</div></div>
<div class="rim"></div>
</body></html>
